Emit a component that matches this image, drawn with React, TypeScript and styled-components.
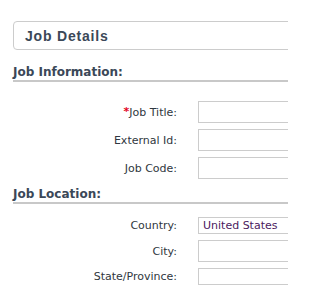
import React from "react";
import styled, { createGlobalStyle } from "styled-components";

const GlobalStyle = createGlobalStyle`
  html, body {
    margin: 0;
    padding: 0;
    background: #ffffff;
    overflow: hidden;
  }
  body {
    font-family: "DejaVu Sans", Verdana, sans-serif;
  }
`;

const Viewport = styled.div`
  width: 100%;
  max-width: 288px;
  height: 288px;
  overflow: hidden;
`;

const Page = styled.div`
  width: 320px;
  padding: 21px 0 0 13px;
  box-sizing: border-box;
`;

const HeaderPanel = styled.div`
  box-sizing: border-box;
  height: 29px;
  border: 1px solid #cccccc;
  border-radius: 4px;
  background: #ffffff;
  display: flex;
  align-items: center;
  padding: 1px 0 0 11px;
`;

const PanelTitle = styled.h1`
  margin: 0;
  font-family: "Liberation Sans", Arial, sans-serif;
  font-size: 14px;
  font-weight: bold;
  letter-spacing: 0.8px;
  color: #3b4858;
`;

const SectionTitle = styled.h2<{ $top: number }>`
  margin: ${(p) => p.$top}px 0 0 0;
  font-family: "DejaVu Sans", Verdana, sans-serif;
  font-size: 12px;
  line-height: 14px;
  font-weight: bold;
  color: #3b4858;
  padding-bottom: 1px;
  border-bottom: 2px solid #c8c8c8;
`;

const Form = styled.div<{ $top: number }>`
  display: grid;
  grid-template-columns: 164px 1fr;
  column-gap: 21px;
  row-gap: 6px;
  align-items: center;
  margin-top: ${(p) => p.$top}px;
`;

const Label = styled.label`
  font-family: "DejaVu Sans", Verdana, sans-serif;
  font-size: 11px;
  color: #2f3740;
  text-align: right;
  white-space: nowrap;
`;

const Required = styled.span`
  color: #e2001a;
  font-weight: bold;
  font-size: 11px;
  position: relative;
  top: -1px;
`;

const TextInput = styled.input`
  box-sizing: border-box;
  width: 160px;
  height: 22px;
  border: 1px solid #cccccc;
  background: #ffffff;
  margin: 0;
  padding: 0 4px;
  font-family: "DejaVu Sans", Verdana, sans-serif;
  font-size: 11px;
`;

const Select = styled.select`
  appearance: none;
  -webkit-appearance: none;
  box-sizing: border-box;
  width: 160px;
  height: 17px;
  border: 1px solid #cccccc;
  border-radius: 0;
  background: #ffffff;
  margin: 0;
  padding: 0 4px;
  font-family: "DejaVu Sans", Verdana, sans-serif;
  font-size: 11px;
  line-height: 15px;
  color: #4b1a5e;
  outline: none;
`;

export default function App() {
  return (
    <>
      <GlobalStyle />
      <Viewport>
        <Page>
          <HeaderPanel>
            <PanelTitle>Job Details</PanelTitle>
          </HeaderPanel>

          <SectionTitle $top={15}>Job Information:</SectionTitle>
          <Form $top={19}>
            <Label>
              <Required>*</Required>Job Title:
            </Label>
            <TextInput type="text" />
            <Label>External Id:</Label>
            <TextInput type="text" />
            <Label>Job Code:</Label>
            <TextInput type="text" />
          </Form>

          <SectionTitle $top={8}>Job Location:</SectionTitle>
          <Form $top={13}>
            <Label>Country:</Label>
            <Select defaultValue="US">
              <option value="US">United States</option>
            </Select>
            <Label>City:</Label>
            <TextInput type="text" />
            <Label>State/Province:</Label>
            <Select defaultValue="">
              <option value=""></option>
            </Select>
          </Form>
        </Page>
      </Viewport>
    </>
  );
}
